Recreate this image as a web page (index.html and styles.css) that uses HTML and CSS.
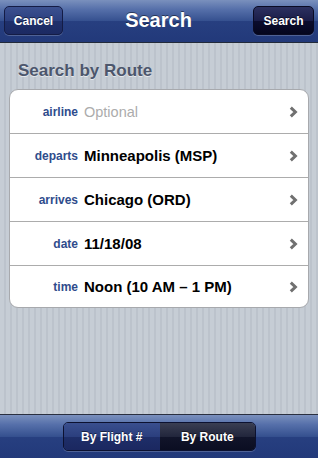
FILE: index.html
```html
<!DOCTYPE html>
<html>
<head>
<meta charset="utf-8">
<link rel="stylesheet" href="styles.css">
</head>
<body>
<div class="screen">
  <header class="navbar">
    <button class="nav-btn cancel">Cancel</button>
    <h1 class="nav-title">Search</h1>
    <button class="nav-btn done">Search</button>
  </header>
  <main class="content">
    <h2 class="section-title">Search by Route</h2>
    <ul class="group">
      <li class="row"><span class="label">airline</span><span class="value placeholder">Optional</span><svg class="chev" width="9" height="12" viewBox="0 0 9 12"><path d="M1.8 1.6 L6.4 6 L1.8 10.4" fill="none" stroke="#707070" stroke-width="3"/></svg></li>
      <li class="row"><span class="label">departs</span><span class="value">Minneapolis (MSP)</span><svg class="chev" width="9" height="12" viewBox="0 0 9 12"><path d="M1.8 1.6 L6.4 6 L1.8 10.4" fill="none" stroke="#707070" stroke-width="3"/></svg></li>
      <li class="row"><span class="label">arrives</span><span class="value">Chicago (ORD)</span><svg class="chev" width="9" height="12" viewBox="0 0 9 12"><path d="M1.8 1.6 L6.4 6 L1.8 10.4" fill="none" stroke="#707070" stroke-width="3"/></svg></li>
      <li class="row"><span class="label">date</span><span class="value">11/18/08</span><svg class="chev" width="9" height="12" viewBox="0 0 9 12"><path d="M1.8 1.6 L6.4 6 L1.8 10.4" fill="none" stroke="#707070" stroke-width="3"/></svg></li>
      <li class="row"><span class="label">time</span><span class="value">Noon (10 AM – 1 PM)</span><svg class="chev" width="9" height="12" viewBox="0 0 9 12"><path d="M1.8 1.6 L6.4 6 L1.8 10.4" fill="none" stroke="#707070" stroke-width="3"/></svg></li>
    </ul>
  </main>
  <footer class="toolbar">
    <div class="segmented">
      <div class="seg">By Flight #</div>
      <div class="seg selected">By Route</div>
    </div>
  </footer>
</div>
</body>
</html>
```
FILE: styles.css
```css
* { box-sizing: border-box; }
html, body { margin: 0; padding: 0; }
body {
  width: 318px;
  height: 458px;
  font-family: "Liberation Sans", Arial, sans-serif;
  overflow: hidden;
}
.screen {
  display: flex;
  flex-direction: column;
  height: 458px;
  background-color: #c3cad2;
  background-image: repeating-linear-gradient(90deg, #c6cdd5 0, #c6cdd5 4px, #bcc3cc 4px, #bcc3cc 6px);
}
.navbar {
  height: 43px;
  flex: none;
  display: flex;
  align-items: center;
  justify-content: space-between;
  padding: 0 4px 1px 4px;
  border-bottom: 1px solid #222a3a;
  background: linear-gradient(to bottom, #7a90bd 0%, #5670aa 22%, #35508f 50%, #273f80 51%, #22397a 100%);
}
.nav-title {
  margin: 0;
  font-size: 20px;
  font-weight: bold;
  color: #fff;
  text-shadow: 0 -1px 0 rgba(0,0,0,0.45);
  margin-left: 1px;
}
.nav-btn {
  height: 29px;
  border-radius: 5px;
  font-family: "Liberation Sans", Arial, sans-serif;
  font-size: 12px;
  font-weight: bold;
  color: #fff;
  padding: 0;
  text-shadow: 0 -1px 0 rgba(0,0,0,0.5);
  box-shadow: 0 1px 0 rgba(255,255,255,0.2);
}
.cancel {
  width: 59px;
  border: 1px solid #141c45;
  background: linear-gradient(to bottom, #3c5190 0%, #2c4080 50%, #1f306c 51%, #1c2a62 100%);
}
.done {
  width: 61px;
  border: 1px solid #0a0b24;
  background: linear-gradient(to bottom, #2c3160 0%, #1a1d48 50%, #0b0c2e 51%, #05061e 100%);
}
.content {
  flex: 1;
  padding-top: 18px;
}
.section-title {
  margin: 0 0 8px 18px;
  font-size: 17px;
  line-height: 20px;
  font-weight: bold;
  color: #4c566c;
  text-shadow: 0 1px 0 rgba(255,255,255,0.6);
}
.group {
  list-style: none;
  margin: 0 9px;
  padding: 0;
  background: #fff;
  border: 1px solid #a7a9ad;
  border-radius: 9px;
}
.row {
  height: 44px;
  display: flex;
  align-items: center;
  border-bottom: 1px solid #acacac;
  padding-right: 10px;
}
.row:last-child { border-bottom: none; height: 41px; }
.label {
  width: 68px;
  text-align: right;
  font-size: 12px;
  font-weight: bold;
  color: #2f4c8c;
  margin-right: 6px;
}
.value {
  flex: 1;
  font-size: 15px;
  font-weight: bold;
  color: #000;
}
.value.placeholder {
  font-weight: normal;
  font-size: 14.5px;
  color: #acacac;
}
.chev { flex: none; }
.toolbar {
  height: 44px;
  flex: none;
  display: flex;
  align-items: center;
  justify-content: center;
  border-top: 1px solid #2a3040;
  background: linear-gradient(to bottom, #7a90bd 0%, #5670aa 22%, #35508f 50%, #273f80 51%, #22397a 100%);
  padding-left: 1px;
}
.segmented {
  display: flex;
  width: 193px;
  height: 29px;
  border: 1px solid #0c1130;
  border-radius: 5px;
  overflow: hidden;
  box-shadow: 0 1px 0 rgba(255,255,255,0.2);
}
.seg {
  flex: 1;
  display: flex;
  align-items: center;
  justify-content: center;
  font-size: 12px;
  font-weight: bold;
  color: #fff;
  text-shadow: 0 -1px 0 rgba(0,0,0,0.5);
  background: linear-gradient(to bottom, #3a4f8e 0%, #2b3f7e 50%, #1e2e69 51%, #1b2860 100%);
}
.seg.selected {
  background: linear-gradient(to bottom, #3a3e52 0%, #22263c 50%, #11142a 51%, #0b0e22 100%);
}
```
